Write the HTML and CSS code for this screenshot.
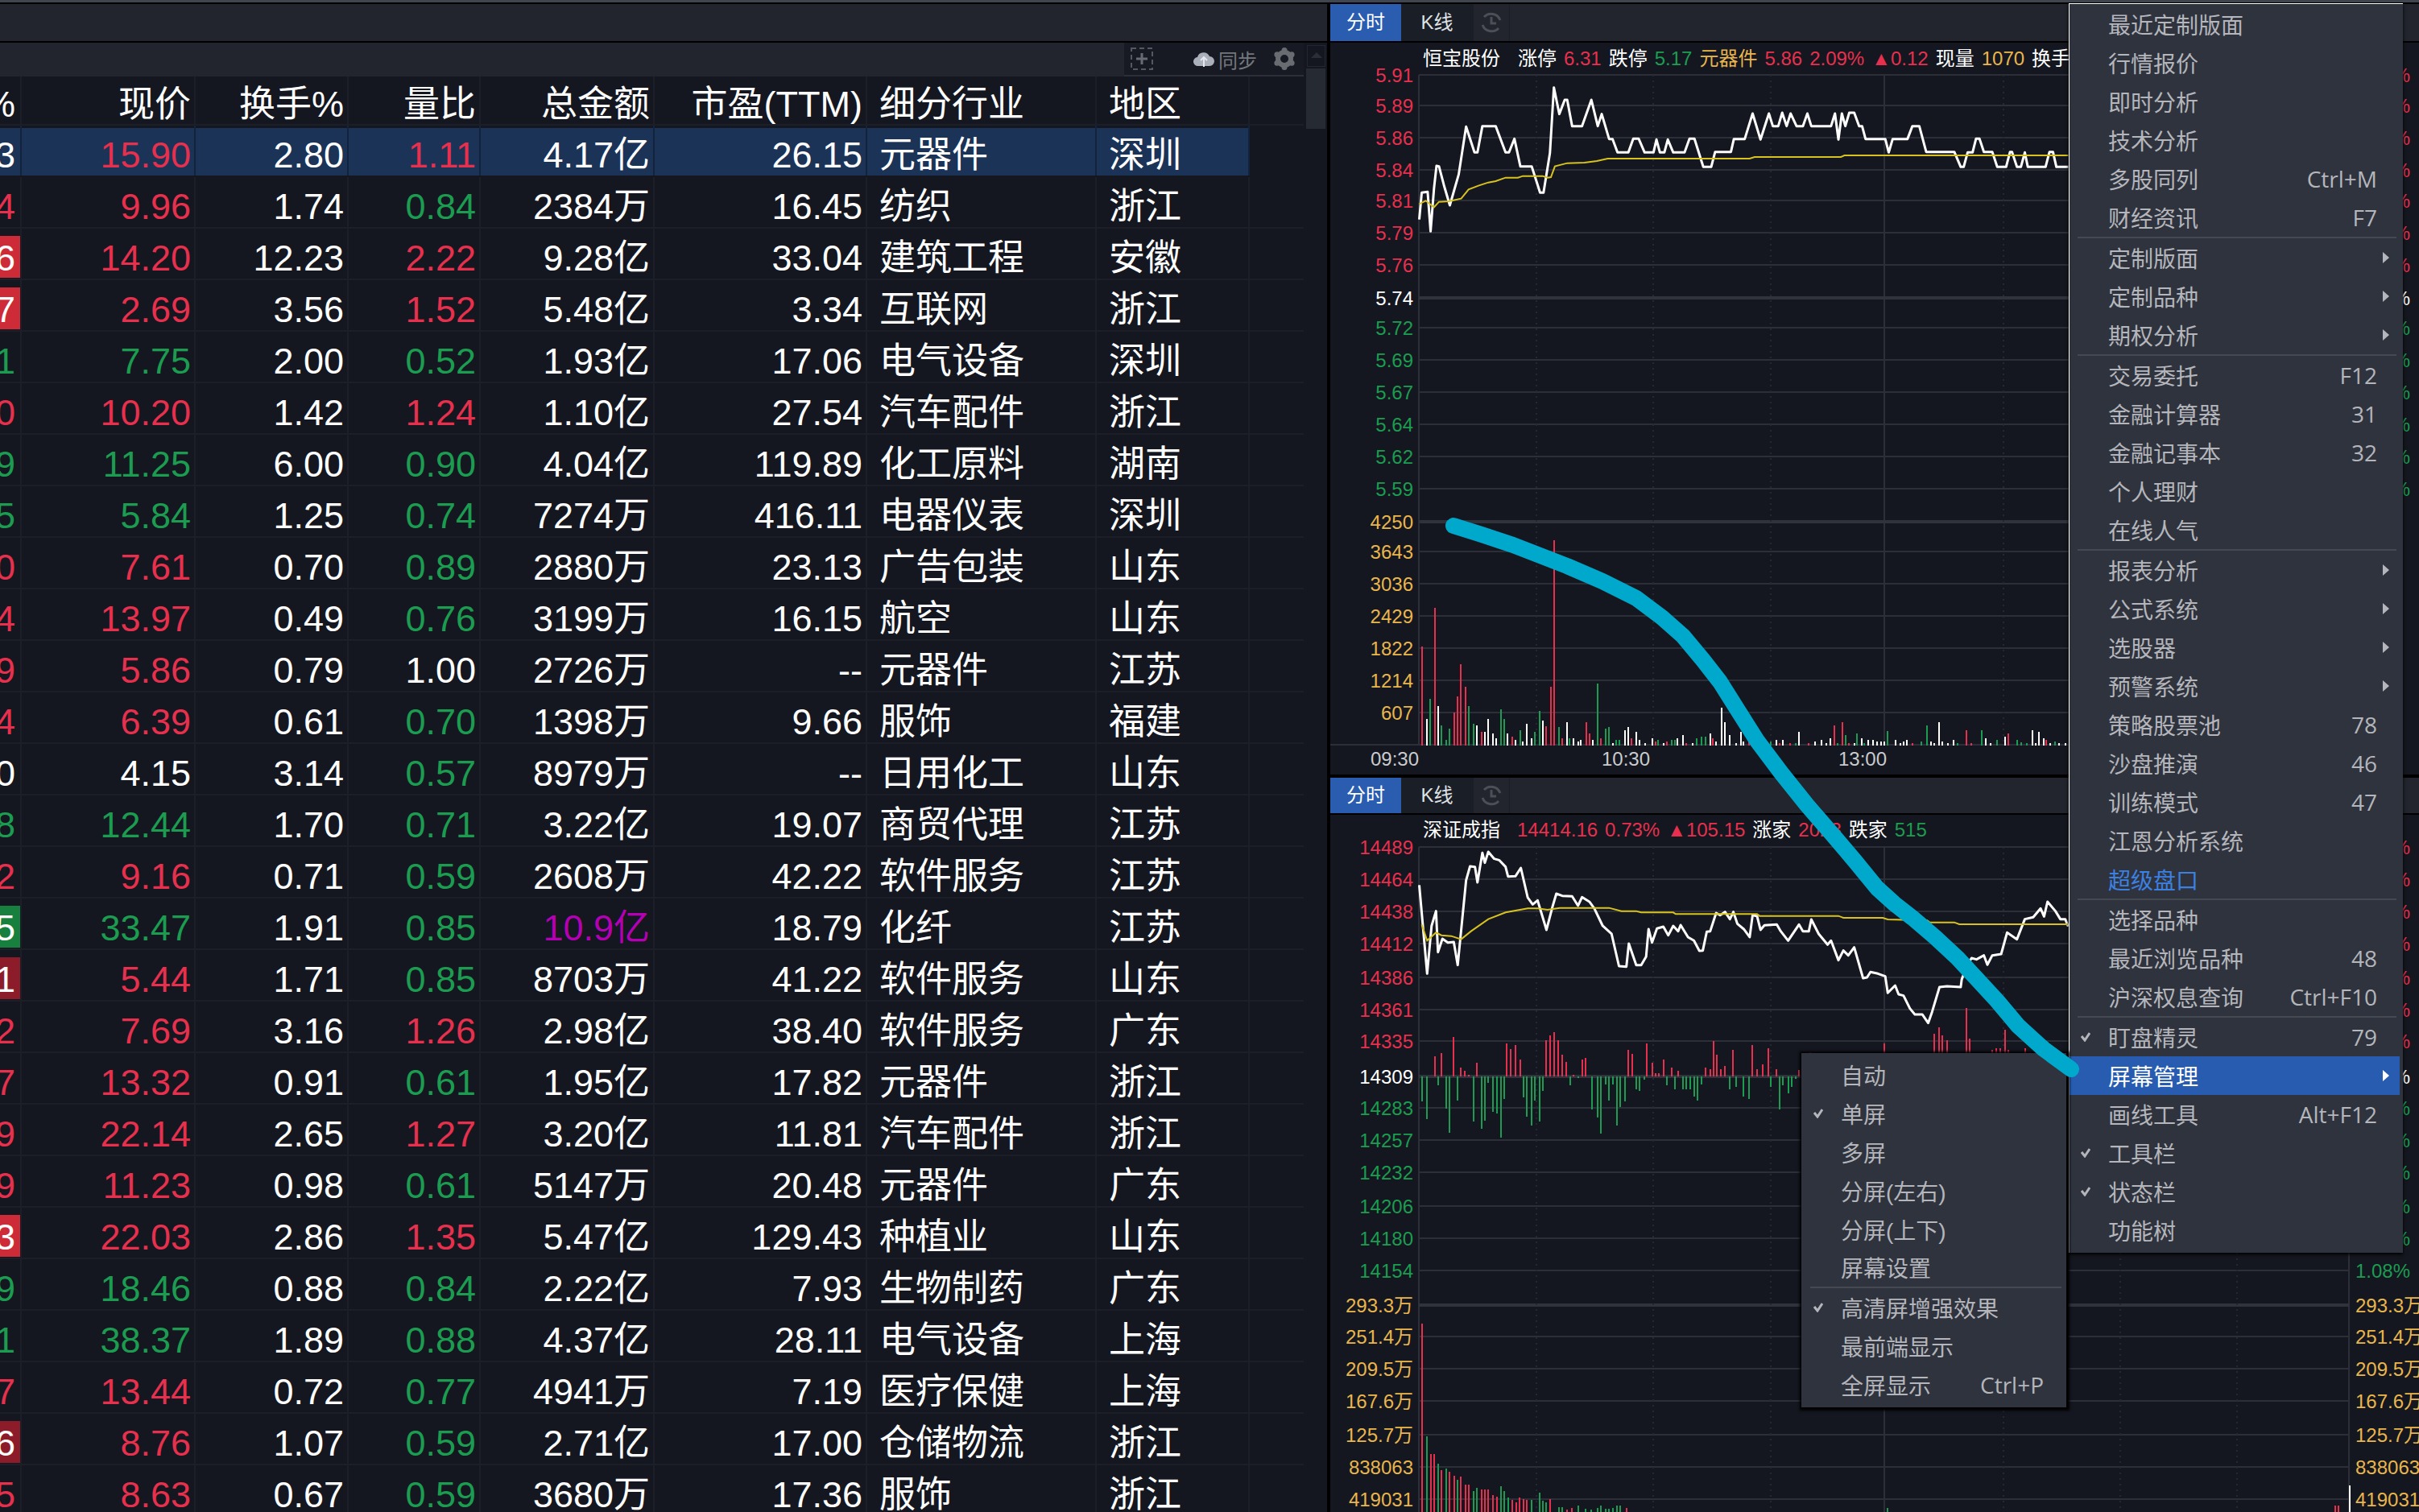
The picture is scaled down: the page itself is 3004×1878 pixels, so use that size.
FILE: index.html
```html
<!DOCTYPE html>
<html lang="zh-CN">
<head>
    <meta charset="UTF-8">
    <title>行情</title>
    <link rel="stylesheet" href="styles.css">
</head>
<body>
    <div class="top-strip"></div>
    <div class="main">
        <section class="left">
            <div class="left-bar"></div>
            <div class="left-body">
                <div class="table-col">
                    <div class="tools-row">
                        <div class="tools-fill"></div>
                        <div class="tools">
                            <svg class="icon-add" width="28" height="28" viewBox="0 0 28 28"><rect x="1" y="1" width="26" height="26" fill="none" stroke="#55585f" stroke-width="2" stroke-dasharray="6 4"/><path d="M14 7V21M7 14H21" stroke="#686b71" stroke-width="3"/></svg>
                            <svg class="icon-cloud" width="26" height="22" viewBox="0 0 26 22"><path d="M6 20a5.500 5.500 0 0 1-1-11a8 8 0 0 1 15-1a6 6 0 0 1 0 12z" fill="#aab0ba"/><path d="M13 21V9M9 13l4-4l4 4" fill="none" stroke="#e4e8ee" stroke-width="2"/></svg>
                            <span class="sync">同步</span>
                            <svg class="icon-gear" width="28" height="28" viewBox="-14 -14 28 28"><g fill="#696c71"><circle cx="0" cy="-10.500" r="3.500"/><circle cx="9.100" cy="-5.250" r="3.500"/><circle cx="9.100" cy="5.250" r="3.500"/><circle cx="0" cy="10.500" r="3.500"/><circle cx="-9.100" cy="5.250" r="3.500"/><circle cx="-9.100" cy="-5.250" r="3.500"/></g><circle r="8" fill="none" stroke="#696c71" stroke-width="6"/></svg>
                        </div>
                    </div>
                    <div class="row head">
                        <span class="pct">%</span><span class="num">现价</span><span class="num">换手%</span><span class="num">量比</span><span class="num">总金额</span><span class="num">市盈(TTM)</span><span class="txt">细分行业</span><span class="txt">地区</span><span class="end"></span>
                    </div>
                    <div class="row sel">
                        <span class="pct b-red">3</span><span class="num up">15.90</span><span class="num">2.80</span><span class="num up">1.11</span><span class="num">4.17亿</span><span class="num">26.15</span><span class="txt">元器件</span><span class="txt">深圳</span><span class="end"></span>
                    </div>
                    <div class="row">
                        <span class="pct up">4</span><span class="num up">9.96</span><span class="num">1.74</span><span class="num down">0.84</span><span class="num">2384万</span><span class="num">16.45</span><span class="txt">纺织</span><span class="txt">浙江</span><span class="end"></span>
                    </div>
                    <div class="row">
                        <span class="pct b-red">6</span><span class="num up">14.20</span><span class="num">12.23</span><span class="num up">2.22</span><span class="num">9.28亿</span><span class="num">33.04</span><span class="txt">建筑工程</span><span class="txt">安徽</span><span class="end"></span>
                    </div>
                    <div class="row">
                        <span class="pct b-red">7</span><span class="num up">2.69</span><span class="num">3.56</span><span class="num up">1.52</span><span class="num">5.48亿</span><span class="num">3.34</span><span class="txt">互联网</span><span class="txt">浙江</span><span class="end"></span>
                    </div>
                    <div class="row">
                        <span class="pct down">1</span><span class="num down">7.75</span><span class="num">2.00</span><span class="num down">0.52</span><span class="num">1.93亿</span><span class="num">17.06</span><span class="txt">电气设备</span><span class="txt">深圳</span><span class="end"></span>
                    </div>
                    <div class="row">
                        <span class="pct up">0</span><span class="num up">10.20</span><span class="num">1.42</span><span class="num up">1.24</span><span class="num">1.10亿</span><span class="num">27.54</span><span class="txt">汽车配件</span><span class="txt">浙江</span><span class="end"></span>
                    </div>
                    <div class="row">
                        <span class="pct down">9</span><span class="num down">11.25</span><span class="num">6.00</span><span class="num down">0.90</span><span class="num">4.04亿</span><span class="num">119.89</span><span class="txt">化工原料</span><span class="txt">湖南</span><span class="end"></span>
                    </div>
                    <div class="row">
                        <span class="pct down">5</span><span class="num down">5.84</span><span class="num">1.25</span><span class="num down">0.74</span><span class="num">7274万</span><span class="num">416.11</span><span class="txt">电器仪表</span><span class="txt">深圳</span><span class="end"></span>
                    </div>
                    <div class="row">
                        <span class="pct up">0</span><span class="num up">7.61</span><span class="num">0.70</span><span class="num down">0.89</span><span class="num">2880万</span><span class="num">23.13</span><span class="txt">广告包装</span><span class="txt">山东</span><span class="end"></span>
                    </div>
                    <div class="row">
                        <span class="pct up">4</span><span class="num up">13.97</span><span class="num">0.49</span><span class="num down">0.76</span><span class="num">3199万</span><span class="num">16.15</span><span class="txt">航空</span><span class="txt">山东</span><span class="end"></span>
                    </div>
                    <div class="row">
                        <span class="pct up">9</span><span class="num up">5.86</span><span class="num">0.79</span><span class="num">1.00</span><span class="num">2726万</span><span class="num">--</span><span class="txt">元器件</span><span class="txt">江苏</span><span class="end"></span>
                    </div>
                    <div class="row">
                        <span class="pct up">4</span><span class="num up">6.39</span><span class="num">0.61</span><span class="num down">0.70</span><span class="num">1398万</span><span class="num">9.66</span><span class="txt">服饰</span><span class="txt">福建</span><span class="end"></span>
                    </div>
                    <div class="row">
                        <span class="pct">0</span><span class="num">4.15</span><span class="num">3.14</span><span class="num down">0.57</span><span class="num">8979万</span><span class="num">--</span><span class="txt">日用化工</span><span class="txt">山东</span><span class="end"></span>
                    </div>
                    <div class="row">
                        <span class="pct down">8</span><span class="num down">12.44</span><span class="num">1.70</span><span class="num down">0.71</span><span class="num">3.22亿</span><span class="num">19.07</span><span class="txt">商贸代理</span><span class="txt">江苏</span><span class="end"></span>
                    </div>
                    <div class="row">
                        <span class="pct up">2</span><span class="num up">9.16</span><span class="num">0.71</span><span class="num down">0.59</span><span class="num">2608万</span><span class="num">42.22</span><span class="txt">软件服务</span><span class="txt">江苏</span><span class="end"></span>
                    </div>
                    <div class="row">
                        <span class="pct b-green">5</span><span class="num down">33.47</span><span class="num">1.91</span><span class="num down">0.85</span><span class="num big">10.9亿</span><span class="num">18.79</span><span class="txt">化纤</span><span class="txt">江苏</span><span class="end"></span>
                    </div>
                    <div class="row">
                        <span class="pct b-dark">1</span><span class="num up">5.44</span><span class="num">1.71</span><span class="num down">0.85</span><span class="num">8703万</span><span class="num">41.22</span><span class="txt">软件服务</span><span class="txt">山东</span><span class="end"></span>
                    </div>
                    <div class="row">
                        <span class="pct up">2</span><span class="num up">7.69</span><span class="num">3.16</span><span class="num up">1.26</span><span class="num">2.98亿</span><span class="num">38.40</span><span class="txt">软件服务</span><span class="txt">广东</span><span class="end"></span>
                    </div>
                    <div class="row">
                        <span class="pct up">7</span><span class="num up">13.32</span><span class="num">0.91</span><span class="num down">0.61</span><span class="num">1.95亿</span><span class="num">17.82</span><span class="txt">元器件</span><span class="txt">浙江</span><span class="end"></span>
                    </div>
                    <div class="row">
                        <span class="pct up">9</span><span class="num up">22.14</span><span class="num">2.65</span><span class="num up">1.27</span><span class="num">3.20亿</span><span class="num">11.81</span><span class="txt">汽车配件</span><span class="txt">浙江</span><span class="end"></span>
                    </div>
                    <div class="row">
                        <span class="pct up">9</span><span class="num up">11.23</span><span class="num">0.98</span><span class="num down">0.61</span><span class="num">5147万</span><span class="num">20.48</span><span class="txt">元器件</span><span class="txt">广东</span><span class="end"></span>
                    </div>
                    <div class="row">
                        <span class="pct b-red">3</span><span class="num up">22.03</span><span class="num">2.86</span><span class="num up">1.35</span><span class="num">5.47亿</span><span class="num">129.43</span><span class="txt">种植业</span><span class="txt">山东</span><span class="end"></span>
                    </div>
                    <div class="row">
                        <span class="pct down">9</span><span class="num down">18.46</span><span class="num">0.88</span><span class="num down">0.84</span><span class="num">2.22亿</span><span class="num">7.93</span><span class="txt">生物制药</span><span class="txt">广东</span><span class="end"></span>
                    </div>
                    <div class="row">
                        <span class="pct down">1</span><span class="num down">38.37</span><span class="num">1.89</span><span class="num down">0.88</span><span class="num">4.37亿</span><span class="num">28.11</span><span class="txt">电气设备</span><span class="txt">上海</span><span class="end"></span>
                    </div>
                    <div class="row">
                        <span class="pct up">7</span><span class="num up">13.44</span><span class="num">0.72</span><span class="num down">0.77</span><span class="num">4941万</span><span class="num">7.19</span><span class="txt">医疗保健</span><span class="txt">上海</span><span class="end"></span>
                    </div>
                    <div class="row">
                        <span class="pct b-dark">6</span><span class="num up">8.76</span><span class="num">1.07</span><span class="num down">0.59</span><span class="num">2.71亿</span><span class="num">17.00</span><span class="txt">仓储物流</span><span class="txt">浙江</span><span class="end"></span>
                    </div>
                    <div class="row">
                        <span class="pct up">5</span><span class="num up">8.63</span><span class="num">0.67</span><span class="num down">0.59</span><span class="num">3680万</span><span class="num">17.36</span><span class="txt">服饰</span><span class="txt">浙江</span><span class="end"></span>
                    </div>
                </div>
                <div class="scroll">
                    <div class="scroll-up"></div>
                    <div class="scroll-thumb"></div>
                </div>
            </div>
        </section>

        <section class="right">
            <div class="tabs">
                <span class="tab active">分时</span>
                <span class="tab">K线</span>
                <span class="tab-icon">
                    <svg width="28" height="30" viewBox="0 0 28 30"><path d="M5 8a12 12 0 0 1 20 4M23 22a12 12 0 0 1-20-4" fill="none" stroke="#4c4f56" stroke-width="3"/><path d="M14 8V16H20" fill="none" stroke="#4c4f56" stroke-width="3"/></svg>
                </span>
            </div>
            <div class="chart chart-top">
                <div class="info">
                    <span class="name">恒宝股份</span>
                    <span>涨停</span><span class="up">6.31</span><span>跌停</span><span class="down">5.17</span><span class="gold">元器件</span><span class="up">5.86</span><span class="up">2.09%</span><span class="up">▲0.12</span><span>现量</span><span class="gold">1070</span><span>换手</span>
                </div>
                <svg class="plot" width="1352" height="909" viewBox="1652 53 1352 909">
                    <path class="grid" d="M1762 93H2917M1762 131H2917M1762 171H2917M1762 211H2917M1762 249H2917M1762 289H2917M1762 329H2917M1762 407H2917M1762 447H2917M1762 487H2917M1762 527H2917M1762 567H2917M1762 607H2917M1762 685H2917M1762 725H2917M1762 765H2917M1762 805H2917M1762 845H2917M1762 885H2917M1652 925H2917M1762 93V925M2340 93V925M2917 93V925"/>
                    <path class="grid bold" d="M1762 370H2917M1762 648H2917"/>
                    <path class="grid dot" d="M1908 93V925M2053 93V925M2199 93V925M2488 93V925M2633 93V925M2778 93V925"/>
                    <g transform="translate(1640 0) scale(.6124 .3333)">
                        <polyline class="line white" points="200,818 205,718 217,715 223,862 230,700 235,618 240,620 250,690 262,765 280,650 295,472 312,568 318,568 328,470 355,470 375,568 382,568 393,517 405,620 428,620 445,718 452,718 465,570 473,326 484,425 495,372 500,372 510,470 530,470 549,372 562,470 570,425 585,518 592,518 602,568 624,568 634,517 645,517 657,568 675,568 681,520 688,568 697,568 704,520 715,568 738,568 748,517 758,517 776,622 792,622 800,566 832,566 838,518 860,518 876,423 892,520 909,423 917,470 928,470 936,420 945,470 953,423 965,470 978,470 987,423 995,470 1035,470 1043,423 1050,520 1057,423 1064,470 1072,420 1082,420 1092,470 1098,470 1105,518 1145,518 1152,568 1160,518 1190,518 1200,470 1214,470 1228,566 1285,566 1298,622 1304,622 1312,568 1322,568 1329,517 1336,517 1345,566 1362,566 1372,622 1390,622 1398,566 1402,566 1412,622 1420,622 1428,568 1434,622 1470,622 1478,566 1485,566 1492,622 1516,622"/>
                        <polyline class="line yellow" points="200,760 213,748 230,772 240,752 260,750 285,740 300,706 320,692 340,680 355,675 375,662 400,662 410,656 450,656 460,662 467,660 475,620 500,608 535,606 560,600 582,591 870,591 880,585 1055,585 1062,579 1516,579"/>
                    </g>
                    <g transform="translate(1640 500) scale(.6124 .3333)">
                        <path class="bar red" d="M206 1277V910M232 1277V765M271 1277V1155M278 1277V1095M284 1277V975M294 1277V1060M326 1277V1228M388 1277V1245M458 1277V1205M467 1277V1060M473 1277V513M490 1277V1250M539 1277V1190M545 1277V1233M568 1277V1250M630 1277V1250M680 1277V1262M702 1277V1262M742 1277V1268M796 1277V1250M868 1277V1250M930 1277V1268M952 1277V1268M990 1277V1268M1041 1277V1202M1058 1277V1190M1072 1277V1268M1200 1277V1268M1310 1277V1220M1320 1277V1268M1394 1277V1233M1472 1277V1258"/>
                        <path class="bar green" d="M222 1277V1105M245 1277V1203M255 1277V1258M262 1277V1215M300 1277V1130M310 1277V1198M365 1277V1143M372 1277V1178M405 1277V1220M434 1277V1228M444 1277V1148M483 1277V1208M505 1277V1250M561 1277V1047M578 1277V1215M584 1277V1208M600 1277V1258M606 1277V1258M685 1277V1258M712 1277V1258M718 1277V1258M763 1277V1250M773 1277V1245M780 1277V1245M912 1277V1262M963 1277V1268M1048 1277V1268M1065 1277V1238M1088 1277V1233M1103 1277V1268M1149 1277V1225M1218 1277V1262M1229 1277V1202M1292 1277V1268M1340 1277V1220M1372 1277V1258M1412 1277V1258M1420 1277V1265M1432 1277V1268M1490 1277V1262"/>
                        <path class="bar light" d="M215 1277V1180M238 1277V1130M316 1277V1203M333 1277V1228M340 1277V1180M349 1277V1233M356 1277V1250M379 1277V1233M395 1277V1258M410 1277V1262M418 1277V1198M428 1277V1250M450 1277V1185M500 1277V1190M512 1277V1250M522 1277V1262M528 1277V1258M552 1277V1258M592 1277V1268M618 1277V1220M624 1277V1208M640 1277V1228M646 1277V1258M658 1277V1268M672 1277V1250M695 1277V1268M724 1277V1250M734 1277V1240M755 1277V1270M790 1277V1233M802 1277V1262M813 1277V1137M820 1277V1190M829 1277V1238M842 1277V1268M853 1277V1228M858 1277V1262M924 1277V1258M937 1277V1258M970 1277V1228M1003 1277V1262M1016 1277V1258M1025 1277V1268M1033 1277V1250M1082 1277V1268M1097 1277V1250M1110 1277V1258M1120 1277V1258M1128 1277V1262M1136 1277V1262M1143 1277V1262M1166 1277V1258M1176 1277V1268M1183 1277V1262M1189 1277V1258M1237 1277V1262M1244 1277V1268M1254 1277V1190M1260 1277V1262M1272 1277V1268M1284 1277V1258M1348 1277V1250M1358 1277V1268M1388 1277V1245M1443 1277V1220M1450 1277V1268M1457 1277V1228M1467 1277V1250M1480 1277V1268M1498 1277V1268M1510 1277V1268"/>
                    </g>
                    <g class="axis" text-anchor="end">
                        <g class="up"><text x="1755" y="102">5.91</text><text x="1755" y="140">5.89</text><text x="1755" y="180">5.86</text><text x="1755" y="220">5.84</text><text x="1755" y="258">5.81</text><text x="1755" y="298">5.79</text><text x="1755" y="338">5.76</text></g>
                        <text class="flat" x="1755" y="379">5.74</text>
                        <g class="down"><text x="1755" y="416">5.72</text><text x="1755" y="456">5.69</text><text x="1755" y="496">5.67</text><text x="1755" y="536">5.64</text><text x="1755" y="576">5.62</text><text x="1755" y="616">5.59</text></g>
                        <g class="gold"><text x="1755" y="657">4250</text><text x="1755" y="694">3643</text><text x="1755" y="734">3036</text><text x="1755" y="774">2429</text><text x="1755" y="814">1822</text><text x="1755" y="854">1214</text><text x="1755" y="894">607</text></g>
                        <g class="time"><text x="1762" y="951">09:30</text><text x="2049" y="951">10:30</text><text x="2343" y="951">13:00</text></g>
                    </g>
                    <g class="axis">
                        <g class="up"><text x="2925" y="102">2.96%</text><text x="2925" y="140">2.61%</text><text x="2925" y="180">2.09%</text><text x="2925" y="220">1.74%</text><text x="2925" y="258">1.22%</text><text x="2925" y="298">0.87%</text><text x="2925" y="338">0.35%</text></g>
                        <text class="flat" x="2925" y="379">0.00%</text>
                        <g class="down"><text x="2925" y="416">0.35%</text><text x="2925" y="456">0.87%</text><text x="2925" y="496">1.22%</text><text x="2925" y="536">1.74%</text><text x="2925" y="576">2.09%</text><text x="2925" y="616">2.61%</text></g>
                        <g class="gold"><text x="2925" y="657">4250</text><text x="2925" y="694">3643</text><text x="2925" y="734">3036</text><text x="2925" y="774">2429</text><text x="2925" y="814">1822</text><text x="2925" y="854">1214</text><text x="2925" y="894">607</text></g>
                    </g>
                </svg>
            </div>
            <div class="tabs tabs-second">
                <span class="tab active">分时</span>
                <span class="tab">K线</span>
                <span class="tab-icon">
                    <svg width="28" height="30" viewBox="0 0 28 30"><path d="M5 8a12 12 0 0 1 20 4M23 22a12 12 0 0 1-20-4" fill="none" stroke="#4c4f56" stroke-width="3"/><path d="M14 8V16H20" fill="none" stroke="#4c4f56" stroke-width="3"/></svg>
                </span>
            </div>
            <div class="chart chart-bottom">
                <div class="info">
                    <span class="name">深证成指</span>
                    <span class="up">14414.16</span><span class="up">0.73%</span><span class="up">▲105.15</span><span>涨家</span><span class="up">2023</span><span>跌家</span><span class="down">515</span>
                </div>
                <svg class="plot" width="1352" height="866" viewBox="1652 1012 1352 866">
                    <path class="grid" d="M1762 1052H2917M1762 1092H2917M1762 1132H2917M1762 1172H2917M1762 1214H2917M1762 1254H2917M1762 1293H2917M1762 1376H2917M1762 1416H2917M1762 1456H2917M1762 1498H2917M1762 1538H2917M1762 1578H2917M1762 1660H2917M1762 1700H2917M1762 1740H2917M1762 1782H2917M1762 1822H2917M1762 1862H2917M1762 1052V1878M2340 1052V1878M2917 1052V1878"/>
                    <path class="grid bold" d="M1762 1337H2917M1762 1621H2917"/>
                    <path class="grid dot" d="M1908 1052V1878M2053 1052V1878M2199 1052V1878M2488 1052V1878M2633 1052V1878M2778 1052V1878"/>
                    <g transform="translate(1640 960) scale(.6124 .3333)">
                        <path class="bar red" d="M232 1130V1055M245 1130V1045M270 1130V985M284 1130V1098M293 1130V1110M300 1130V1125M316 1130V1080M378 1130V1008M385 1130V1030M395 1130V1015M405 1130V1068M458 1130V995M466 1130V978M473 1130V965M482 1130V995M490 1130V1050M498 1130V1078M512 1130V1125M530 1130V1068M538 1130V1062M624 1130V1032M632 1130V1048M662 1130V1008M672 1130V1080M680 1130V1118M686 1130V1118M696 1130V1068M712 1130V1098M725 1130V1110M780 1130V1098M790 1130V1105M797 1130V1000M803 1130V1050M812 1130V1105M820 1130V1092M836 1130V1032M875 1130V1015M885 1130V1105M897 1130V1085M908 1130V1025M925 1130V1105M970 1130V1108M992 1130V1040M1143 1130V1008M1245 1130V972M1254 1130V948M1261 1130V978M1270 1130V995M1310 1130V875M1316 1130V990M1362 1130V1032M1370 1130V1025M1378 1130V1025M1388 1130V958M1394 1130V1032M1428 1130V1025"/>
                        <path class="bar green" d="M206 1130V1225M215 1130V1290M238 1130V1165M255 1130V1250M262 1130V1340M277 1130V1220M310 1130V1298M326 1130V1325M333 1130V1295M340 1130V1155M349 1130V1262M357 1130V1268M365 1130V1360M372 1130V1215M411 1130V1210M418 1130V1280M428 1130V1315M434 1130V1220M444 1130V1298M450 1130V1185M506 1130V1165M522 1130V1136M550 1130V1255M562 1130V1285M568 1130V1345M578 1130V1160M584 1130V1220M592 1130V1160M601 1130V1315M608 1130V1245M618 1130V1225M640 1130V1180M646 1130V1185M656 1130V1142M702 1130V1165M718 1130V1178M734 1130V1178M742 1130V1180M750 1130V1178M757 1130V1205M764 1130V1220M773 1130V1160M829 1130V1178M843 1130V1170M857 1130V1205M868 1130V1215M913 1130V1170M931 1130V1255M938 1130V1165M948 1130V1195M955 1130V1170M964 1130V1140"/>
                        <polyline class="line white" points="200,418 216,748 225,570 234,515 238,668 247,618 258,632 270,630 278,716 295,400 303,348 313,350 318,408 328,298 333,335 340,294 352,320 362,325 375,350 380,386 395,385 406,354 420,465 430,490 440,475 458,585 470,500 478,450 490,458 510,460 522,495 530,463 545,480 555,505 572,570 590,600 605,720 620,722 625,636 640,716 650,716 660,685 665,582 672,632 682,580 695,573 705,605 715,570 725,590 730,567 745,612 757,625 768,663 775,662 783,592 790,590 802,522 810,530 820,518 830,545 837,518 845,562 858,582 870,612 876,530 885,534 892,585 900,568 925,565 933,590 948,625 970,565 978,590 990,590 995,546 1010,600 1028,640 1035,625 1050,698 1060,662 1070,680 1082,650 1100,765 1108,762 1115,742 1130,748 1145,758 1150,820 1165,792 1172,825 1182,830 1195,878 1205,900 1220,900 1232,932 1240,890 1255,798 1270,795 1298,798 1300,770 1310,720 1320,690 1330,695 1345,680 1352,715 1362,680 1380,675 1392,595 1412,620 1428,545 1445,538 1460,505 1467,535 1474,480 1490,515 1500,545 1510,545 1516,572"/>
                        <polyline class="line yellow" points="205,565 216,625 234,595 245,605 265,608 285,620 305,590 340,545 375,520 420,505 440,505 460,510 485,503 585,503 610,515 640,515 650,520 715,520 720,526 885,526 890,533 1050,533 1060,540 1140,540 1150,546 1230,550 1235,557 1285,557 1295,564 1516,564"/>
                    </g>
                    <g transform="translate(1640 1400) scale(.6124 .3333)">
                        <path class="bar red" d="M206 1434V732M223 1434V1218M231 1434V1218M245 1434V1278M262 1434V1285M271 1434V1300M284 1434V1303M294 1434V1332M300 1434V1332M326 1434V1350M333 1434V1350M340 1434V1350M349 1434V1370M357 1434V1378M388 1434V1390M396 1434V1398M404 1434V1380M411 1434V1385M418 1434V1390M466 1434V1385M500 1434V1425M510 1434V1420M620 1434V1418"/>
                        <path class="bar green" d="M215 1434V1152M238 1434V1255M254 1434V1272M277 1434V1315M310 1434V1355M316 1434V1345M365 1434V1337M372 1434V1355M380 1434V1380M428 1434V1390M444 1434V1362M450 1434V1392M458 1434V1397M483 1434V1415M490 1434V1415M522 1434V1410M538 1434V1422M548 1434V1425M562 1434V1418M568 1434V1410M578 1434V1422M584 1434V1422M592 1434V1420M601 1434V1410M607 1434V1410M1149 1434V1420"/>
                    </g>
                    <path class="bar red" d="M2900 1878V1870M2904 1878V1870"/>
                    <path class="bar light" d="M2918 1878V1845"/>
                    <g class="axis" text-anchor="end">
                        <g class="up"><text x="1755" y="1061">14489</text><text x="1755" y="1101">14464</text><text x="1755" y="1141">14438</text><text x="1755" y="1181">14412</text><text x="1755" y="1223">14386</text><text x="1755" y="1263">14361</text><text x="1755" y="1302">14335</text></g>
                        <text class="flat" x="1755" y="1346">14309</text>
                        <g class="down"><text x="1755" y="1385">14283</text><text x="1755" y="1425">14257</text><text x="1755" y="1465">14232</text><text x="1755" y="1507">14206</text><text x="1755" y="1547">14180</text><text x="1755" y="1587">14154</text></g>
                        <g class="gold"><text x="1755" y="1630">293.3万</text><text x="1755" y="1669">251.4万</text><text x="1755" y="1709">209.5万</text><text x="1755" y="1749">167.6万</text><text x="1755" y="1791">125.7万</text><text x="1755" y="1831">838063</text><text x="1755" y="1871">419031</text></g>
                    </g>
                    <g class="axis">
                        <g class="up"><text x="2925" y="1061">1.25%</text><text x="2925" y="1101">1.08%</text><text x="2925" y="1141">0.90%</text><text x="2925" y="1181">0.72%</text><text x="2925" y="1223">0.54%</text><text x="2925" y="1263">0.36%</text><text x="2925" y="1302">0.18%</text></g>
                        <text class="flat" x="2925" y="1346">0.00%</text>
                        <g class="down"><text x="2925" y="1385">0.18%</text><text x="2925" y="1425">0.36%</text><text x="2925" y="1465">0.54%</text><text x="2925" y="1507">0.72%</text><text x="2925" y="1547">0.90%</text><text x="2925" y="1587">1.08%</text></g>
                        <g class="gold"><text x="2925" y="1630">293.3万</text><text x="2925" y="1669">251.4万</text><text x="2925" y="1709">209.5万</text><text x="2925" y="1749">167.6万</text><text x="2925" y="1791">125.7万</text><text x="2925" y="1831">838063</text><text x="2925" y="1871">419031</text></g>
                    </g>
                </svg>
            </div>
        </section>
    </div>

    <nav class="menu main-menu">
        <div class="item"><span class="tick"></span><span class="label">最近定制版面</span></div>
        <div class="item"><span class="tick"></span><span class="label">行情报价</span></div>
        <div class="item"><span class="tick"></span><span class="label">即时分析</span></div>
        <div class="item"><span class="tick"></span><span class="label">技术分析</span></div>
        <div class="item"><span class="tick"></span><span class="label">多股同列</span><span class="key">Ctrl+M</span></div>
        <div class="item"><span class="tick"></span><span class="label">财经资讯</span><span class="key">F7</span></div>
        <div class="sep"></div>
        <div class="item sub"><span class="tick"></span><span class="label">定制版面</span><span class="arrow"></span></div>
        <div class="item sub"><span class="tick"></span><span class="label">定制品种</span><span class="arrow"></span></div>
        <div class="item sub"><span class="tick"></span><span class="label">期权分析</span><span class="arrow"></span></div>
        <div class="sep"></div>
        <div class="item"><span class="tick"></span><span class="label">交易委托</span><span class="key">F12</span></div>
        <div class="item"><span class="tick"></span><span class="label">金融计算器</span><span class="key">31</span></div>
        <div class="item"><span class="tick"></span><span class="label">金融记事本</span><span class="key">32</span></div>
        <div class="item"><span class="tick"></span><span class="label">个人理财</span></div>
        <div class="item"><span class="tick"></span><span class="label">在线人气</span></div>
        <div class="sep"></div>
        <div class="item sub"><span class="tick"></span><span class="label">报表分析</span><span class="arrow"></span></div>
        <div class="item sub"><span class="tick"></span><span class="label">公式系统</span><span class="arrow"></span></div>
        <div class="item sub"><span class="tick"></span><span class="label">选股器</span><span class="arrow"></span></div>
        <div class="item sub"><span class="tick"></span><span class="label">预警系统</span><span class="arrow"></span></div>
        <div class="item"><span class="tick"></span><span class="label">策略股票池</span><span class="key">78</span></div>
        <div class="item"><span class="tick"></span><span class="label">沙盘推演</span><span class="key">46</span></div>
        <div class="item"><span class="tick"></span><span class="label">训练模式</span><span class="key">47</span></div>
        <div class="item"><span class="tick"></span><span class="label">江恩分析系统</span></div>
        <div class="item link"><span class="tick"></span><span class="label">超级盘口</span></div>
        <div class="sep"></div>
        <div class="item"><span class="tick"></span><span class="label">选择品种</span></div>
        <div class="item"><span class="tick"></span><span class="label">最近浏览品种</span><span class="key">48</span></div>
        <div class="item"><span class="tick"></span><span class="label">沪深权息查询</span><span class="key">Ctrl+F10</span></div>
        <div class="sep"></div>
        <div class="item"><span class="tick"><svg width="12" height="12" viewBox="0 0 12 12"><path d="M1 5L5 10L11 1"/></svg></span><span class="label">盯盘精灵</span><span class="key">79</span></div>
        <div class="item sub hover"><span class="tick"></span><span class="label">屏幕管理</span><span class="arrow"></span></div>
        <div class="item"><span class="tick"></span><span class="label">画线工具</span><span class="key">Alt+F12</span></div>
        <div class="item"><span class="tick"><svg width="12" height="12" viewBox="0 0 12 12"><path d="M1 5L5 10L11 1"/></svg></span><span class="label">工具栏</span></div>
        <div class="item"><span class="tick"><svg width="12" height="12" viewBox="0 0 12 12"><path d="M1 5L5 10L11 1"/></svg></span><span class="label">状态栏</span></div>
        <div class="item"><span class="tick"></span><span class="label">功能树</span></div>
    </nav>

    <nav class="menu sub-menu">
        <div class="item"><span class="tick"></span><span class="label">自动</span></div>
        <div class="item"><span class="tick"><svg width="12" height="12" viewBox="0 0 12 12"><path d="M1 5L5 10L11 1"/></svg></span><span class="label">单屏</span></div>
        <div class="item"><span class="tick"></span><span class="label">多屏</span></div>
        <div class="item"><span class="tick"></span><span class="label">分屏(左右)</span></div>
        <div class="item"><span class="tick"></span><span class="label">分屏(上下)</span></div>
        <div class="item"><span class="tick"></span><span class="label">屏幕设置</span></div>
        <div class="sep"></div>
        <div class="item"><span class="tick"><svg width="12" height="12" viewBox="0 0 12 12"><path d="M1 5L5 10L11 1"/></svg></span><span class="label">高清屏增强效果</span></div>
        <div class="item"><span class="tick"></span><span class="label">最前端显示</span></div>
        <div class="item"><span class="tick"></span><span class="label">全屏显示</span><span class="key">Ctrl+P</span></div>
    </nav>

    <svg class="pen" width="3004" height="1878" viewBox="0 0 3004 1878">
        <polyline points="1805,653 1840,664 1879,677 1946,703 1990,722 2032,743 2064,767 2090,790 2115,820 2136,847 2158,882 2182,920 2212,960 2244,1000 2276,1037 2304,1070 2331,1103 2352,1122 2375,1140 2403,1164 2431,1190 2456,1217 2480,1243 2506,1274 2538,1303 2572,1328"/>
    </svg>
</body>
</html>
```

FILE: styles.css
```css
body {
    margin: 0;
    width: 3004px;
    height: 1878px;
    overflow: hidden;
    position: relative;
    background: #000;
    color: #fff;
    font-family: "Liberation Sans", "Noto Sans CJK SC", sans-serif;
}
.top-strip {
    height: 3px;
    background: #3f4650;
    border-bottom: 2px solid #000;
}
.main {
    display: flex;
    height: 1873px;
}
.up { color: #e6304e; fill: #e6304e; }
.down { color: #1c9c50; fill: #1c9c50; }
.gold { color: #e9b54d; fill: #e9b54d; }
.flat { fill: #fff; }

/* left: quote table */
.left {
    width: 1648px;
    margin-right: 4px;
    background: #14171f;
}
.left-bar {
    height: 46px;
    background: #22252d;
    border-bottom: 2px solid #000;
}
.left-body {
    display: flex;
}
.table-col {
    width: 1619px;
}
.tools-row {
    display: flex;
    height: 42px;
}
.tools-fill {
    flex: 1;
    background: #22252d;
}
.tools {
    width: 223px;
    box-sizing: border-box;
    display: flex;
    align-items: center;
    padding-left: 8px;
    background: #171a22;
    border-bottom: 2px solid #2c2f38;
}
.icon-cloud {
    margin-left: 50px;
}
.sync {
    margin-left: 5px;
    font-size: 24px;
    color: #74777d;
}
.icon-gear {
    margin-left: 20px;
}
.row {
    display: grid;
    grid-template-columns: 27px 216px 190px 164px 216px 264px 285px 190px 67px;
    height: 64px;
    box-sizing: border-box;
    font-size: 45px;
    line-height: 50px;
    border-bottom: 2px solid #1c1f28;
}
.row span {
    box-sizing: border-box;
    padding-top: 12px;
    border-right: 2px solid #1c1f28;
    white-space: nowrap;
}
.row.head {
    height: 61px;
    line-height: 48px;
}
.row.head span {
    padding-top: 11px;
}
.row .end {
    border-right: none;
}
.pct {
    display: flex;
    justify-content: flex-end;
    overflow: hidden;
    padding-right: 6px;
}
.num {
    text-align: right;
    padding-right: 4px;
}
.txt {
    padding-left: 15px;
}
.row span.big {
    color: #b400b4;
}
.row.sel {
    border-bottom-color: #14171f;
}
.row.sel span:not(.end) {
    background: linear-gradient(#14171f 3px, #1b3357 3px);
    border-right-color: #14233c;
}
.row span.b-red,
.row span.b-dark,
.row span.b-green {
    color: #fff;
    background: linear-gradient(transparent 9px, var(--fill) 9px, var(--fill) 61px, transparent 61px);
    background-clip: padding-box;
}
.row span.b-red { --fill: #cd2b37; }
.row span.b-dark { --fill: #8c1c2a; }
.row span.b-green { --fill: #17803f; }
.scroll {
    width: 29px;
    box-sizing: border-box;
    padding-left: 3px;
    padding-right: 2px;
}
.scroll-up {
    width: 23px;
    height: 27px;
    margin: 3px 0 2px 1px;
    box-sizing: border-box;
    border: 1px solid #24272f;
    position: relative;
}
.scroll-up::after {
    content: "";
    position: absolute;
    left: 4px;
    top: 8px;
    border-left: 7px solid transparent;
    border-right: 7px solid transparent;
    border-bottom: 7px solid #2b2e37;
}
.scroll-thumb {
    height: 75px;
    background: #262a33;
}

/* right: time charts */
.right {
    width: 1352px;
    display: flex;
    flex-direction: column;
    background: #14171f;
}
.tabs {
    display: flex;
    height: 46px;
    flex: none;
    background: #22252d;
    border-bottom: 2px solid #000;
    font-size: 24px;
    line-height: 46px;
}
.tabs-second {
    height: 44px;
    line-height: 44px;
    border-top: 4px solid #000;
}
.tab {
    width: 89px;
    text-align: center;
    background: #1a1e27;
    color: #dfe1e4;
}
.tab.active {
    width: 88px;
    background: #2a5db0;
    color: #fff;
}
.tab-icon {
    width: 46px;
    display: flex;
    align-items: center;
    justify-content: center;
    box-sizing: border-box;
    border-left: 1px solid #1a1e27;
    border-right: 1px solid #1a1e27;
}
.chart {
    position: relative;
    flex: none;
}
.chart-top {
    height: 909px;
}
.chart-bottom {
    height: 866px;
}
.plot {
    display: block;
}
.info {
    position: absolute;
    left: 115px;
    top: 0;
    display: flex;
    gap: 9px;
    height: 38px;
    font-size: 24px;
    line-height: 38px;
    white-space: nowrap;
}
.chart-top .info {
    top: 1px;
}
.info .name {
    margin-right: 13px;
}
.chart-bottom .info .name {
    margin-right: 12px;
}
.grid {
    fill: none;
    stroke: #2c2f38;
    stroke-width: 2;
    shape-rendering: crispEdges;
}
.grid.bold {
    stroke: #30333c;
    stroke-width: 4;
}
.grid.dot {
    stroke: #252830;
    stroke-dasharray: 2 5;
}
.line, .bar {
    fill: none;
    vector-effect: non-scaling-stroke;
}
.line.white {
    stroke: #fff;
    stroke-width: 3;
    stroke-linejoin: round;
}
.line.yellow {
    stroke: #d8c220;
    stroke-width: 2;
}
.bar {
    stroke-width: 2;
    shape-rendering: crispEdges;
}
.bar.red { stroke: #e6304e; }
.bar.green { stroke: #1c9c50; }
.bar.light { stroke: #fff; }
.axis {
    font-size: 24px;
}
.axis .time {
    fill: #c9cbce;
}

/* right click menus */
.menu {
    position: absolute;
    box-sizing: border-box;
    display: flex;
    flex-direction: column;
    background: #2f333e;
    color: #b4b6bb;
    font-size: 28px;
}
.main-menu {
    left: 2569px;
    top: 4px;
    width: 415px;
    height: 1552px;
    padding: 1px 4px 4px 0;
    border-top: 1px solid #fff;
    border-left: 1px solid #fff;
    box-shadow: 0 2px 4px #000;
}
.sub-menu {
    left: 2237px;
    top: 1308px;
    width: 329px;
    height: 440px;
    padding: 3px 0 4px;
    box-shadow: 1px 1px 3px 3px #000;
}
.item {
    display: flex;
    align-items: center;
    height: 48px;
    padding-right: 28px;
}
.item.sub {
    padding-right: 13px;
}
.item.hover {
    background: #285cb0;
    color: #fff;
}
.item.link {
    color: #3c80e0;
}
.key {
    font-family: "Open Sans", "Liberation Sans", sans-serif;
}
.tick {
    width: 48px;
    flex: none;
    padding-left: 14px;
    box-sizing: border-box;
    display: flex;
}
.sub-menu .tick {
    width: 49px;
    padding-left: 15px;
}
.tick path {
    fill: none;
    stroke: #b4b6bb;
    stroke-width: 3;
}
.label {
    flex: 1;
}
.arrow {
    border-left: 8px solid #b4b6bb;
    border-top: 7px solid transparent;
    border-bottom: 7px solid transparent;
}
.hover .arrow {
    border-left-color: #fff;
}
.sep {
    height: 2px;
    flex: none;
    margin: 0 4px 0 10px;
    background: #454952;
}
.sub-menu .sep {
    margin: 0 6px 0 11px;
}

/* hand drawn mark over the screen */
.pen {
    position: absolute;
    left: 0;
    top: 0;
}
.pen polyline {
    fill: none;
    stroke: #00a8cc;
    stroke-width: 20;
    stroke-linecap: round;
    stroke-linejoin: round;
}
```
